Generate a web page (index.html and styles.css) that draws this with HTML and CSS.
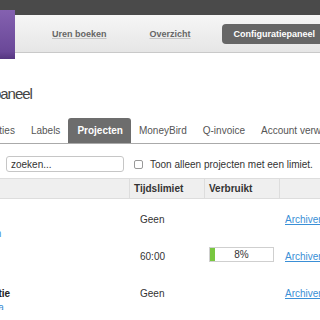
FILE: index.html
```html
<!DOCTYPE html>
<html lang="nl">
<head>
    <meta charset="UTF-8">
    <meta name="viewport" content="width=device-width, initial-scale=1.0">
    <title>Configuratiepaneel</title>
    <link rel="stylesheet" href="styles.css">
</head>
<body>

    <!-- Bovenbalk -->
    <div class="topbar"></div>
    <nav class="mainnav">
        <div class="logo"></div>
        <a class="navlink" href="#">Uren boeken</a>
        <a class="navlink" href="#">Overzicht</a>
        <a class="navbtn" href="#">Configuratiepaneel</a>
    </nav>

    <div class="content">
        <h1 class="page-title">Configuratiepaneel</h1>

        <!-- Tabs -->
        <div class="tabs">
            <a class="tab" href="#">Notificaties</a>
            <a class="tab" href="#">Labels</a>
            <a class="tab active" href="#">Projecten</a>
            <a class="tab" href="#">MoneyBird</a>
            <a class="tab" href="#">Q-invoice</a>
            <a class="tab" href="#">Account verwijderen</a>
        </div>

        <div class="toolbar">
            <input class="search" type="text" value="zoeken...">
            <label class="check"><span class="box"></span>Toon alleen projecten met een limiet.</label>
        </div>

        <!-- Projectenlijst -->
        <div class="projects">
            <div class="row head">
                <div class="cell"></div>
                <div class="cell">Tijdslimiet</div>
                <div class="cell">Verbruikt</div>
                <div class="cell"></div>
            </div>
            <div class="row">
                <div class="cell name"><b>Intern</b><a href="#">Bouwbedrijf Jansen</a></div>
                <div class="cell time">Geen</div>
                <div class="cell usage"></div>
                <div class="cell action"><a href="#">Archiveren</a></div>
            </div>
            <div class="row">
                <div class="cell name"><b>Website</b><a href="#">Webdesign Studios</a></div>
                <div class="cell time">60:00</div>
                <div class="cell usage">
                    <div class="bar"><div class="fill" style="width: 8%"></div><span>8%</span></div>
                </div>
                <div class="cell action"><a href="#">Archiveren</a></div>
            </div>
            <div class="row">
                <div class="cell name"><b>Projectadministratie</b><a href="#">Stichting Nova Terra</a></div>
                <div class="cell time">Geen</div>
                <div class="cell usage"></div>
                <div class="cell action"><a href="#">Archiveren</a></div>
            </div>
        </div>
    </div>

</body>
</html>
```

FILE: styles.css
```css
body {
    margin: 0;
    font-family: "Liberation Sans", Arial, sans-serif;
    font-size: 10px;
    color: #333;
    background: #fff;
    overflow: hidden;
}
a {
    color: inherit;
    text-decoration: none;
}

/* bovenbalk */
.topbar {
    height: 15px;
    background: #4a4a4a;
}
.mainnav {
    position: relative;
    height: 37px;
    display: flex;
    align-items: center;
    padding-left: 9px;
    background: linear-gradient(#f6f6f6, #e6e6e6);
    border-bottom: 1px solid #c9c9c9;
    white-space: nowrap;
}
.logo {
    position: absolute;
    top: -5px;
    left: -20px;
    width: 35px;
    height: 49px;
    background: linear-gradient(#8461b0, #6a4898 85%, #553680);
}
.navlink {
    flex-shrink: 0;
    margin-left: 43px;
    font-size: 9px;
    font-weight: bold;
    color: #666;
    text-decoration: underline;
    text-decoration-color: #c4c4c4;
}
.navbtn {
    flex-shrink: 0;
    margin-left: 31px;
    padding: 0 12px;
    height: 20px;
    line-height: 20px;
    border-radius: 4px;
    background: #666;
    color: #fff;
    font-size: 9px;
    font-weight: bold;
}

.content {
    margin-left: -86px;
}
.page-title {
    margin: 31px 0 0 10px;
    font-size: 15px;
    line-height: 20px;
    font-weight: normal;
    letter-spacing: -1px;
    color: #444;
}

/* tabs */
.tabs {
    display: flex;
    margin-top: 14px;
    padding-left: 44px;
    border-bottom: 1px solid #aaa;
    white-space: nowrap;
}
.tab {
    flex-shrink: 0;
    height: 25px;
    line-height: 25px;
    padding: 0 8px;
    color: #555;
    border-radius: 3px 3px 0 0;
}
.tab.active {
    background: #6d6d6d;
    color: #fff;
    font-weight: bold;
    padding: 0 8px 0 9px;
}

.toolbar {
    display: flex;
    align-items: center;
    margin: 12px 0 0 92px;
    white-space: nowrap;
}
.search {
    box-sizing: border-box;
    width: 118px;
    height: 16px;
    padding: 0 4px;
    border: 1px solid #c6c6c6;
    border-radius: 3px;
    font-family: inherit;
    font-size: 10px;
    color: #333;
}
.check {
    display: flex;
    align-items: center;
    margin-left: 10px;
    color: #333;
}
.check .box {
    width: 7px;
    height: 7px;
    margin-right: 7px;
    border: 1px solid #999;
    border-radius: 2px;
    background: #fff;
}

/* projecten */
.projects {
    margin-top: 6px;
}
.row {
    display: grid;
    grid-template-columns: 215px 75px 75px 100px;
    height: 37px;
    box-sizing: border-box;
    padding-top: 14px;
    line-height: 14px;
    white-space: nowrap;
}
.row.head {
    height: 21px;
    padding-top: 0;
    line-height: 19px;
    background: #efefef;
    border-top: 1px solid #ddd;
    border-bottom: 1px solid #ddd;
    font-weight: bold;
    color: #333;
}
.row.head .cell + .cell {
    border-left: 1px solid #ddd;
    padding-left: 4px;
}
.cell.name b {
    display: block;
    color: #222;
}
.cell.name a {
    display: block;
    color: #3d8dd4;
}
.cell.time {
    padding-left: 11px;
}
.cell.usage {
    padding-left: 5px;
}
.cell.action {
    padding-left: 6px;
}
.cell.action a {
    color: #3a8fd6;
    text-decoration: underline;
}
.bar {
    position: relative;
    box-sizing: border-box;
    width: 65px;
    height: 15px;
    margin-top: -3px;
    border: 1px solid #cfcfcf;
    background: #fff;
    text-align: center;
    line-height: 13px;
}
.bar .fill {
    position: absolute;
    top: 0;
    left: 0;
    bottom: 0;
    background: #79c740;
}
.bar span {
    position: relative;
}
```
